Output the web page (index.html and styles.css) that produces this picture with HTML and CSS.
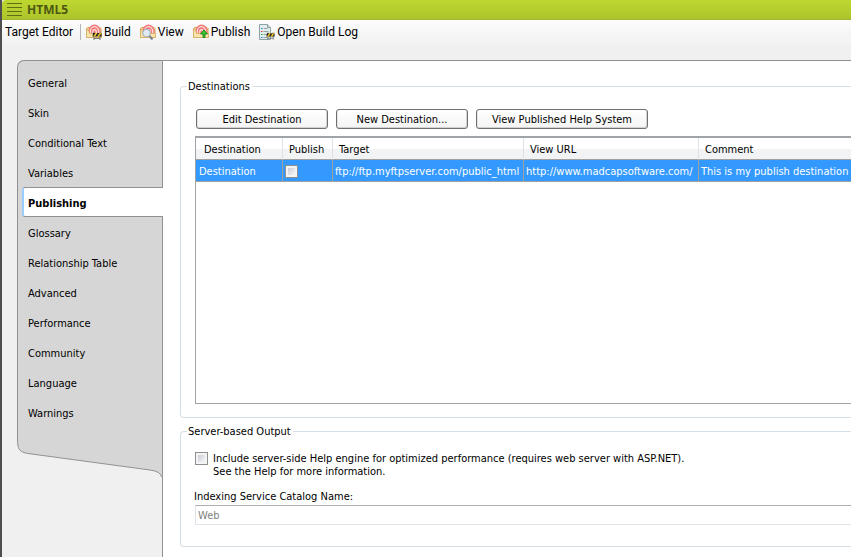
FILE: index.html
```html
<!DOCTYPE html>
<html lang="en">
<head>
<meta charset="utf-8">
<title>Target Editor - HTML5</title>
<link rel="stylesheet" href="styles.css">
</head>
<body>
<svg class="symbols" aria-hidden="true">
  <defs>
    <symbol id="target" viewBox="0 0 16 16">
      <path d="M.5 13.500V4.500L2 3.500h12l1 1v9z" fill="#f3d793" stroke="#cfa358"/>
      <path d="M2.500 9.500V7a6 6.500 0 0 1 12 0v2.500z" fill="#f4777a"/>
      <path d="M4.300 9V7.500a4.200 4.800 0 0 1 8.400 0V9M6.700 9V8a1.800 2.300 0 0 1 3.600 0v1" fill="none" stroke="#fde3df" stroke-width="1.200"/>
      <path d="M.5 13.500V6h2l1 3.500h12v4z" fill="#f8e3ac" stroke="#d6ae63" stroke-width=".8"/>
    </symbol>
    <symbol id="barrier" viewBox="0 0 10 8">
      <path d="M2 0v8M8 0v8M2 6.500h6" stroke="#777" fill="none"/>
      <path d="M1 1h8.500v3.500H.5z" fill="#222"/>
      <path d="M1 4.500L3.500 1h2L3 4.500zM5 4.500L7.500 1h2L7 4.500z" fill="#f5c928"/>
    </symbol>
  </defs>
</svg>
<div class="app">
  <header class="titlebar">
    <svg class="grip" viewBox="0 0 15 14" aria-hidden="true"><path d="M0 .5h15M0 4.500h15M0 8.500h15M0 12.500h15" stroke="#5f6c18"/></svg>
    <h1>HTML5</h1>
  </header>
  <div class="toolbar" role="toolbar" aria-label="Target Editor">
    <span class="caption">Target Editor</span>
    <button class="tool" type="button">
      <svg viewBox="0 0 16 16" aria-hidden="true"><use href="#target"/><use href="#barrier" x="6" y="8" width="10" height="8"/></svg>Build</button>
    <button class="tool" type="button">
      <svg viewBox="0 0 16 16" aria-hidden="true"><use href="#target"/><path d="M9.500 12l3 3.500" stroke="#788490" stroke-width="2"/><circle cx="6.500" cy="9" r="3.800" fill="#dfeaf4" stroke="#9eabb9"/></svg>View</button>
    <button class="tool" type="button">
      <svg viewBox="0 0 16 16" aria-hidden="true"><use href="#target"/><path d="M11 6l3.500 4H12v3.500h-2V10H7.500z" fill="#35c72f" stroke="#107b18" stroke-width=".8"/></svg>Publish</button>
    <button class="tool" type="button">
      <svg viewBox="0 0 16 16" aria-hidden="true"><path d="M.5.5h8l3 3v12H.5z" fill="#e4eded" stroke="#8da2a5"/><path d="M8.500.5v3h3" fill="#c6d5d7" stroke="#8da2a5"/><path d="M4.500 4.500h4M4.500 7.500h5M4.500 10.500h5M4.500 13.500h4" stroke="#8fa5a8"/><path d="M2 4.500h1.500" stroke="#287edb"/><path d="M2 7.500h1.500" stroke="#d93b32"/><path d="M2 10.500h1.500" stroke="#2ba942"/><path d="M2 13.500h1.500" stroke="#287edb"/><use href="#barrier" x="7" y="8" width="9" height="8"/></svg>Open Build Log</button>
  </div>
  <div class="workspace">
    <div class="side">
      <nav class="tabs" aria-label="Target settings">
        <a href="#general">General</a>
        <a href="#skin">Skin</a>
        <a href="#conditional">Conditional Text</a>
        <a href="#variables">Variables</a>
        <a href="#publishing" class="current" aria-current="page">Publishing</a>
        <a href="#glossary">Glossary</a>
        <a href="#relationship">Relationship Table</a>
        <a href="#advanced">Advanced</a>
        <a href="#performance">Performance</a>
        <a href="#community">Community</a>
        <a href="#language">Language</a>
        <a href="#warnings">Warnings</a>
      </nav>
      <svg class="tail" viewBox="0 0 145 50" aria-hidden="true">
        <path d="M.5 0V12C.5 22 2 25 11 26.500L133 43q11 1.500 11.500 7H145V0z" fill="#d6d6d6"/>
        <path d="M.5 0V12C.5 22 2 25 11 26.500L133 43q11 1.500 11.500 7" fill="none" stroke="#919191"/>
      </svg>
    </div>
    <main class="page">
      <fieldset class="group">
        <legend>Destinations</legend>
        <div class="actions">
          <button class="btn" type="button">Edit Destination</button>
          <button class="btn" type="button">New Destination...</button>
          <button class="btn wide" type="button">View Published Help System</button>
        </div>
        <div class="grid">
          <table>
            <colgroup><col class="c-dest"><col class="c-pub"><col class="c-target"><col class="c-url"><col></colgroup>
            <thead><tr><th>Destination</th><th>Publish</th><th>Target</th><th>View URL</th><th>Comment</th></tr></thead>
            <tbody><tr>
              <td>Destination</td>
              <td><input class="check" type="checkbox" aria-label="Publish"></td>
              <td>ftp://ftp.myftpserver.com/public_html</td>
              <td>http://www.madcapsoftware.com/</td>
              <td>This is my publish destination</td>
            </tr></tbody>
          </table>
        </div>
      </fieldset>
      <fieldset class="group server">
        <legend>Server-based Output</legend>
        <label class="option"><input class="check" type="checkbox"><span>Include server-side Help engine for optimized performance (requires web server with ASP.NET).<br>See the Help for more information.</span></label>
        <label class="field-label" for="catalog">Indexing Service Catalog Name:</label>
        <input class="field" id="catalog" type="text" value="Web" disabled>
      </fieldset>
    </main>
  </div>
</div>
</body>
</html>
```
FILE: styles.css
```css
* { box-sizing: border-box; }
body {
  margin: 0;
  background: #f0f0f0;
  color: #000;
  font: 11px/13px "DejaVu Sans Condensed", "Noto Sans", sans-serif;
}
button, input { font: inherit; color: inherit; }
.symbols { position: absolute; width: 0; height: 0; }
.app {
  display: flex;
  flex-direction: column;
  min-height: 100vh;
  overflow: hidden;
  border-left: 2px solid #4f4f51;
}
.titlebar {
  display: flex;
  align-items: center;
  gap: 5px;
  height: 20px;
  padding-left: 5px;
  border-bottom: 1px solid #a5b434;
  border-top-left-radius: 4px;
  background: linear-gradient(#bed730, #adc42b);
  color: #4c5711;
}
.titlebar h1 { margin: 0; font: bold 12px/16px "Open Sans", sans-serif; }
.grip { width: 15px; height: 14px; }
.toolbar {
  display: flex;
  align-items: center;
  height: 40px;
  padding: 0 0 16px 3px;
  background: linear-gradient(#fcfcfc, #f0f0f0 28px);
  font: 12px/16px Roboto, sans-serif;
  white-space: nowrap;
}
.caption { padding-right: 7px; border-right: 1px solid #b5b5b5; margin-right: 5px; }
.tool {
  display: flex;
  align-items: center;
  gap: 2px;
  margin-right: 9px;
  padding: 0;
  border: 0;
  background: none;
}
.tool svg { width: 16px; height: 16px; }
.workspace { display: flex; flex: 1; padding-left: 15px; }
.side { width: 145px; flex: none; }
.tabs {
  padding-top: 6px;
  border: solid #919191;
  border-width: 1px 0 0 1px;
  border-top-left-radius: 7px;
  background: #d6d6d6;
}
.tabs a {
  display: block;
  height: 30px;
  padding-left: 10px;
  color: inherit;
  line-height: 34px;
  text-decoration: none;
}
.tabs .current {
  position: relative;
  margin: 0 -1px 0 4px;
  padding-left: 4px;
  border: solid #919191;
  border-width: 1px 0;
  border-left: 2px solid #99ccff;
  border-radius: 3px 0 0 3px;
  background: #fff;
  font-weight: bold;
  line-height: 32px;
}
.tail { display: block; width: 145px; height: 50px; }
.page {
  flex: 1;
  min-width: 0;
  padding: 19px 0 10px 17px;
  border: solid #919191;
  border-width: 1px 0 0 1px;
  background: #fff;
}
.group {
  min-width: 0;
  margin: 0 0 7px;
  padding: 16px 0 13px 14px;
  border: 1px solid #d5dfe5;
  border-right: 0;
  border-radius: 4px 0 0 4px;
}
.group legend { margin-left: -8px; padding: 0 2px 0 1px; }
.server { padding: 14px 0 21px 14px; }
.actions { display: flex; gap: 8px; margin: 0 0 7px 1px; }
.btn {
  width: 132px;
  height: 20px;
  padding: 2px 0 0;
  border: 1px solid #707070;
  border-radius: 3px;
  background: linear-gradient(#fff, #f4f4f4);
  box-shadow: inset -1px -1px #d2d2d2, inset 1px 0 #e4e4e4;
  line-height: 16px;
}
.wide { width: 172px; }
.grid {
  height: 268px;
  border: 1px solid #a0a3a8;
  border-top-width: 2px;
  border-right: 0;
}
table { width: 100%; table-layout: fixed; border-collapse: separate; border-spacing: 0; }
.c-dest { width: 87px; }
.c-pub { width: 50px; }
.c-target { width: 191px; }
.c-url { width: 175px; }
th, td { padding: 2px 0 0; overflow: hidden; text-align: left; white-space: nowrap; }
th {
  height: 22px;
  padding-left: 6px;
  border-right: 1px solid #dfe1e4;
  border-bottom: 1px solid #a0a0a0;
  background: linear-gradient(#fff 50%, #f2f3f5 50%);
  font-weight: normal;
}
th:first-child { padding-left: 8px; }
td {
  height: 22px;
  padding-left: 2px;
  border-right: 1px solid #a0a0a0;
  border-bottom: 1px solid #a0a0a0;
  background: #3399ff;
  color: #fff;
}
td:first-child { padding-left: 3px; }
th:last-child, td:last-child { border-right: 0; }
.check {
  flex: none;
  display: block;
  width: 13px;
  height: 13px;
  margin: 0;
  appearance: none;
  border: 1px solid #8e8f8f;
  background: linear-gradient(135deg, #c9ced6, #f6f6f6) content-box, #f4f4f4;
  padding: 2px;
}
.option { display: flex; gap: 5px; }
.field-label { display: block; margin: 12px 0 2px -1px; }
.field {
  display: block;
  width: 100%;
  height: 20px;
  padding: 0 2px;
  border: 1px solid #e2e3ea;
  border-top-color: #abadb3;
  border-right: 0;
  background: #fff;
  color: #838383;
}
```
